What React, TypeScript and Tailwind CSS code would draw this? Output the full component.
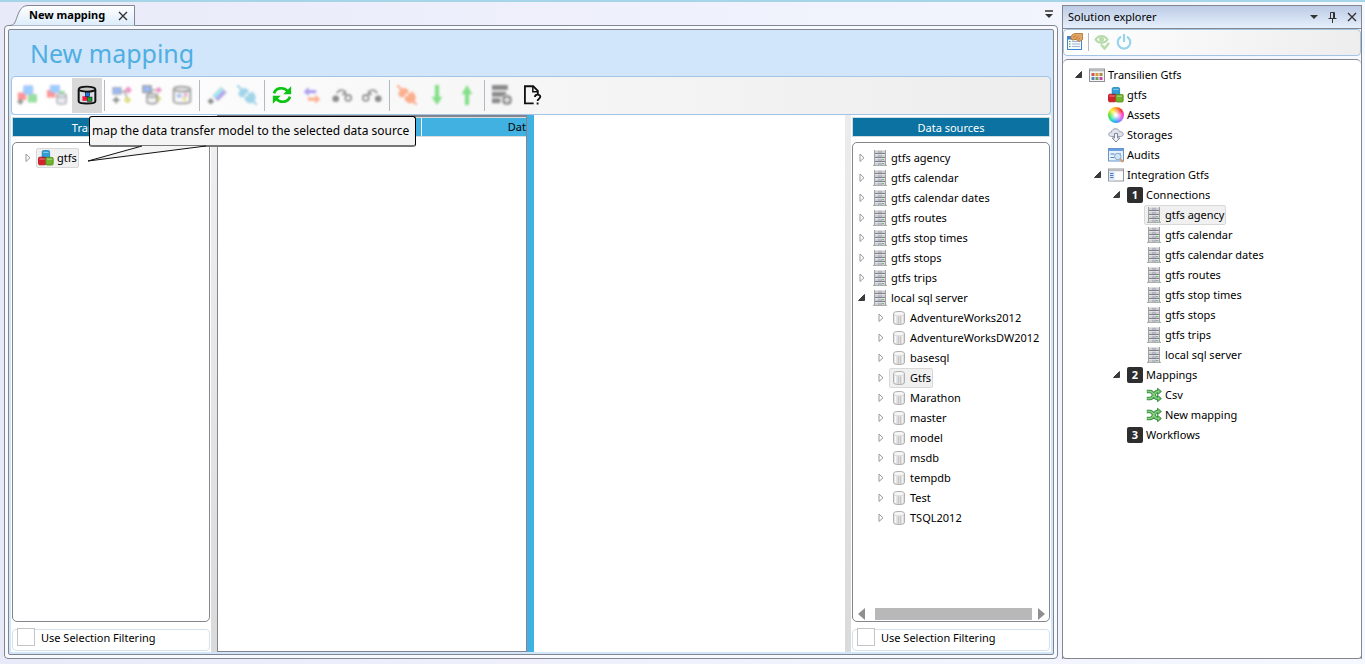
import type { ReactNode } from "react";

type IconName =
  | "blocks"
  | "server"
  | "db"
  | "solution"
  | "wheel"
  | "cloud"
  | "audit"
  | "window"
  | "one"
  | "two"
  | "three"
  | "shuffle";

type Node = {
  label: string;
  icon: IconName;
  level: number;
  state?: "open" | "closed";
  selected?: boolean;
};

function Cube({ x, y, c, d }: { x: number; y: number; c: string; d: string }) {
  return (
    <g>
      <rect x={x} y={y} width="7.4" height="7.6" rx="1.2" fill={c} stroke={d} strokeWidth=".8" />
      <path d={`M${x + 1} ${y + 1.8}h5.4`} stroke="#fff" strokeOpacity=".45" strokeWidth="1" />
    </g>
  );
}

function TreeIcon({ name }: { name: IconName }) {
  return (
    <svg viewBox="0 0 16 16" className="size-4 shrink-0" aria-hidden="true">
      {name === "blocks" && (
        <>
          <Cube x={4.2} y={0.6} c="#2f9fd8" d="#1c7fb4" />
          <Cube x={0.5} y={7.2} c="#d8202c" d="#a80f1b" />
          <Cube x={7.8} y={7.4} c="#72b52c" d="#4f8c14" />
        </>
      )}
      {name === "server" && (
        <>
          <path d="M1 15.4h14" stroke="#a8b0a8" strokeWidth="1.2" />
          <rect x="2.500" y="0" width="11" height="15" fill="#cdcfd1" />
          <path d="M6 0h4v15H6z" fill="#b6b6c6" />
          <path d="M2.500 3.500h11M2.500 7.500h11M2.500 11.500h11" stroke="#7f8286" />
          <path d="M3 4.500h10M3 8.500h10M3 12.500h10M3 .5h10" stroke="#f2f3f4" strokeOpacity=".6" />
          <path d="M2.500 0v15M13.500 0v15" stroke="#9fa1a4" />
          <path d="M10 13.500h2M10 9.500h2" stroke="#7fb388" />
        </>
      )}
      {name === "db" && (
        <>
          <path
            d="M2.500 3.500C2.500 2 5 1.500 8 1.500s5.500.5 5.500 2v9C13.500 14 11 14.500 8 14.500s-5.500-.5-5.500-2z"
            fill="#dedede"
            stroke="#b0b0b0"
          />
          <ellipse cx="8" cy="3.600" rx="4.600" ry="1.500" fill="#f6f6f6" />
          <path d="M4.500 6v6.800" stroke="#fafafa" strokeWidth="1.500" />
          <path d="M7.500 6.500v7M9.500 6.500v7" stroke="#c6c6c6" />
          <path d="M11.500 6v6.800" stroke="#f5f5f5" />
        </>
      )}
      {name === "solution" && (
        <>
          <rect x=".5" y="2" width="15" height="12.500" fill="#f4f4f4" stroke="#8d9094" />
          <path d="M1 3.300h14" stroke="#b7babd" strokeWidth="2" />
          <path d="M2.500 6h3v3h-3z" fill="#cf574f" />
          <path d="M6.500 6h3v3h-3z" fill="#d79a3c" />
          <path d="M10.500 6h3v3h-3z" fill="#a78845" />
          <path d="M2.500 10h3v3h-3z" fill="#5a7fc0" />
          <path d="M6.500 10h3v3h-3z" fill="#6fa455" />
          <path d="M10.500 10h3v3h-3z" fill="#c847a8" />
        </>
      )}
      {name === "wheel" && (
        <foreignObject x="0" y="0" width="16" height="16">
          <div className="size-4 rounded-full bg-[radial-gradient(circle,#fff_5%,transparent_60%),conic-gradient(#ff9a20,#ff3030,#ff40d0,#b070ff,#30a0ff,#20e0b0,#60e030,#ffee30,#ff9a20)]" />
        </foreignObject>
      )}
      {name === "cloud" && (
        <>
          <path
            d="M3.500 9.500C1.500 9.500.6 8.300.8 7c.2-1.200 1.300-1.800 2.400-1.700C3.600 3.200 5.300 1.700 7.500 1.700c2 0 3.600 1.200 4 3 2-.2 3.700.7 3.700 2.500 0 1.500-1.200 2.300-2.700 2.300z"
            fill="#dfe1ec"
            stroke="#9a9db0"
          />
          <path d="M6.500 6.500h3v4.500h2.300L8 15l-3.800-4h2.300z" fill="#f4f5fa" stroke="#7f8499" />
        </>
      )}
      {name === "audit" && (
        <>
          <rect x=".5" y="1.500" width="15" height="12.500" fill="#e6f1fc" stroke="#6793cc" />
          <path d="M1 3h14" stroke="#6c9fe0" strokeWidth="2" />
          <path d="M2.500 7h4M2.500 10.500h4M8 7h5" stroke="#5a84bd" />
          <circle cx="9.800" cy="9.500" r="3.200" fill="#cfe6f8" stroke="#86a7c5" />
          <path d="M12.200 12l2.800 3" stroke="#d9a066" strokeWidth="2" />
        </>
      )}
      {name === "window" && (
        <>
          <rect x=".5" y="2" width="15" height="12" fill="#fff" stroke="#94979b" />
          <path d="M1 3.300h14" stroke="#b9bcc0" strokeWidth="2" />
          <path d="M1 4.500h5.500v9H1z" fill="#dce7f8" />
          <path d="M2 6.500h3.500M2 8.500h3.500M2 10.500h3.500" stroke="#4e7bc4" />
        </>
      )}
      {(name === "one" || name === "two" || name === "three") && (
        <>
          <rect x="0" y="0" width="16" height="16" rx="2" fill="#2e2e2e" />
          <text x="8" y="12" textAnchor="middle" fontSize="11" fontWeight="700" fill="#fff">
            {name === "one" ? "1" : name === "two" ? "2" : "3"}
          </text>
        </>
      )}
      {name === "shuffle" && (
        <g fill="none" strokeLinejoin="round">
          <path
            d="M.8 4.500h3.500c3.500 0 3.700 7 7 7h1.500M.8 11.500h3.500c3.500 0 3.700-7 7-7h1.500"
            stroke="#3d8e43"
            strokeWidth="3.600"
          />
          <path d="M11.500 1.300l3.900 3.200-3.900 3.200zM11.500 8.300l3.900 3.200-3.900 3.200z" fill="#6dc06c" stroke="#3d8e43" />
          <path
            d="M1.300 4.500h3c3.500 0 3.700 7 7 7H13M1.300 11.500h3c3.500 0 3.700-7 7-7H13"
            stroke="#86cf82"
            strokeWidth="1.600"
          />
        </g>
      )}
    </svg>
  );
}

const indents = ["pl-0", "pl-[19px]", "pl-[38px]", "pl-[57px]"];

function Tree({ nodes, label }: { nodes: Node[]; label: string }) {
  return (
    <ul role="tree" aria-label={label}>
      {nodes.map((n) => (
        <li
          key={n.label}
          role="treeitem"
          aria-selected={!!n.selected}
          className={`flex h-5 items-center ${indents[n.level]}`}
        >
          <span className="flex w-4 shrink-0 justify-center">
            {n.state && (
              <svg viewBox="0 0 10 10" className="size-2.5" aria-hidden="true">
                {n.state === "open" ? (
                  <path d="M7.500 1.500v6H1.500z" fill="#3c3c3c" stroke="#222" strokeWidth=".8" />
                ) : (
                  <path d="M3 1v7.500L7 4.800z" fill="#fff" stroke="#999" />
                )}
              </svg>
            )}
          </span>
          <span
            className={`flex h-5 items-center gap-[3px] rounded-[2px] border px-px whitespace-nowrap ${
              n.selected ? "border-[#d8d8d8] bg-[#f0f0f0]" : "border-transparent"
            }`}
          >
            <TreeIcon name={n.icon} />
            {n.label}
          </span>
        </li>
      ))}
    </ul>
  );
}

function Tool({
  label,
  children,
  active,
  dim = true,
}: {
  label: string;
  children: ReactNode;
  active?: boolean;
  dim?: boolean;
}) {
  return (
    <button
      type="button"
      aria-label={label}
      className={`flex h-[35px] w-[30px] shrink-0 items-center justify-center pb-0.5 ${active ? "bg-[#d9d9d9]" : ""}`}
    >
      <svg
        viewBox="0 0 24 24"
        fill="none"
        aria-hidden="true"
        className={dim ? "size-5 opacity-50 blur-[0.8px]" : "size-5"}
      >
        {children}
      </svg>
    </button>
  );
}

function Sep() {
  return <span className="mx-0.5 h-[31px] w-px shrink-0 bg-[#b3b8c2]" />;
}

function Blocks() {
  return (
    <>
      <rect x="1" y="9" width="10" height="9" fill="#ff3030" />
      <rect x="13" y="11" width="11" height="10" fill="#35c045" />
      <rect x="8" y="1" width="11" height="10" rx="1" fill="#38a0ff" stroke="#6d72e8" />
    </>
  );
}

function Plus() {
  return <path d="M4 16.500v7M.5 20h7" stroke="#222" strokeWidth="2.500" />;
}

function Plug({ color }: { color: string }) {
  return (
    <g fill={color} stroke={color}>
      <path d="M0 0l5 5M19 19l5 5" strokeWidth="2.500" />
      <path d="M3 8c2-5 7-5 11-1l-8.500 8C2 13 1.500 10.500 3 8z" />
      <path d="M9 17l9-9C23 12 23 17 19.500 20s-7 1.500-10.500-3z" />
      <path d="M12 9l3 3M8 12l4 4" strokeWidth="2" />
    </g>
  );
}

function MainToolbar() {
  return (
    <div
      role="toolbar"
      aria-label="Mapping tools"
      className="flex h-[39px] shrink-0 items-center rounded border border-[#a3c4e2] bg-linear-to-r from-white to-[#ededed]"
    >
      <Tool label="Add transfer model">
        <Blocks />
        <Plus />
      </Tool>
      <Tool label="Create model from source">
        <rect x="0" y="6" width="10" height="9" fill="#ff3030" />
        <rect x="4" y="0" width="11" height="9" rx="1" fill="#38a0ff" stroke="#6d72e8" />
        <rect x="15" y="7" width="6" height="5" fill="#35c045" />
        <path d="M12 12.500v8.500c0 2.500 11 2.500 11 0v-8.500z" fill="#d4d8e2" stroke="#4a4f5c" strokeWidth="1.500" />
        <ellipse cx="17.500" cy="12.500" rx="5.500" ry="2" fill="#eee" stroke="#4a4f5c" strokeWidth="1.500" />
      </Tool>
      <div className="relative">
        <Tool label="Map model to data source" active dim={false}>
          <path d="M2 5.500v14c0 3.500 20 3.500 20 0v-14" fill="#d9dfe2" stroke="#111" strokeWidth="2.400" />
          <ellipse cx="12" cy="5" rx="10" ry="3" fill="#c5c5c5" stroke="#111" strokeWidth="2.200" />
          <rect x="6.500" y="13.500" width="5.500" height="5.500" fill="#f5173c" />
          <rect x="12.500" y="14.500" width="5.500" height="5" fill="#12a52b" stroke="#111" strokeWidth=".7" />
          <rect x="10" y="9" width="5" height="5" fill="#1677f2" stroke="#111" strokeWidth=".7" />
        </Tool>
        <div role="tooltip" className="absolute top-[38px] left-[17px] z-10 w-max">
          <div className="rounded-[3px] border border-b-2 border-black border-b-[#777] bg-[#f4f4f4] pr-1.5 pl-0.5 text-[12px] leading-7">
            map the data transfer model to the selected data source
          </div>
          <svg viewBox="0 0 120 17" className="absolute -bottom-[15px] -left-px h-[17px] w-[120px]" aria-hidden="true">
            <path d="M54 1L0 16 118 1z" fill="#f4f4f4" />
            <path d="M54 1L0 16 118 1" fill="none" stroke="#111" />
          </svg>
        </div>
      </div>
      <Sep />
      <Tool label="Add mapping">
        <rect x="1" y="3" width="10" height="8" fill="#3a78f0" stroke="#555" />
        <path d="M11 8h4l3 8M14 8l4-2" stroke="#333" strokeWidth="1.500" />
        <path d="M19.500 1.500l4.500 4.500-4.500 4.500L15 6z" fill="#dd3590" />
        <path d="M18.500 13.500l4.500 4.500-4.500 4.500L14 18z" fill="#c2bc10" />
        <path d="M5 14v8M1 18h8" stroke="#222" strokeWidth="2.500" />
      </Tool>
      <Tool label="Map to table">
        <rect x="1" y="1" width="10" height="8" fill="#3a78f0" stroke="#333" strokeWidth="1.500" />
        <path d="M11 6h6M12 12l5 3" stroke="#333" strokeWidth="1.500" />
        <path d="M20 2l4 4-4 4-4-4z" fill="#dd3590" />
        <path d="M19 12l4.500 4.500L19 21l-4-4z" fill="#c2bc10" />
        <path d="M6 12.500v8c0 2.500 12 2.500 12 0v-8z" fill="#e9e9e9" stroke="#333" strokeWidth="1.800" />
        <ellipse cx="12" cy="12.500" rx="6" ry="2" fill="#eee" stroke="#333" strokeWidth="1.800" />
      </Tool>
      <Tool label="Map database">
        <path d="M2 5.500v14c0 3.500 20 3.500 20 0v-14" fill="#f4f4f4" stroke="#444" strokeWidth="2.200" />
        <ellipse cx="12" cy="5" rx="10" ry="3" fill="#ccc" stroke="#444" strokeWidth="2.200" />
        <rect x="6" y="11" width="5" height="4" fill="#557ce8" />
        <path d="M11 13l5 3" stroke="#777" />
        <rect x="15" y="10" width="3" height="4" fill="#dd3590" />
        <rect x="13" y="15" width="4" height="4" fill="#d2cc20" />
      </Tool>
      <Sep />
      <Tool label="New field">
        <path d="M7 13L17 3l6 6-10 10z" fill="#6f50ea" stroke="#666" />
        <path d="M7 13L17 3l3 3L10 16z" fill="#4fd9e5" />
        <path d="M4.500 15.500l4 4-4 4-4-4z" fill="#222" />
      </Tool>
      <Tool label="Connect">
        <Plug color="#4aaed8" />
      </Tool>
      <Sep />
      <Tool label="Refresh" dim={false}>
        <g stroke="#0cc414" strokeWidth="3.200">
          <path d="M2.500 10C4 3.500 13.500 1.500 19 7.500" />
          <path d="M21.500 14C20 20.500 10.500 22.500 5 16.500" />
        </g>
        <path d="M23 1.500V11h-9.500zM1 22.500V13h9.500z" fill="#0cc414" />
      </Tool>
      <Tool label="Swap">
        <path d="M22 17l-6-5.500V15H7v4h9v3.500z" fill="#ff6a28" />
        <path d="M2 8l6-5.500V6h9v4H8v3.500z" fill="#6548e5" />
      </Tool>
      <Tool label="Step forward">
        <circle cx="4.500" cy="16.500" r="4" fill="#222" />
        <circle cx="19.500" cy="15.500" r="3.500" stroke="#333" strokeWidth="2.200" />
        <path d="M6 10c2-5 8-5 10-1" stroke="#333" strokeWidth="2" />
        <path d="M17 6v6h-6z" fill="#333" />
      </Tool>
      <Tool label="Step back">
        <circle cx="19.500" cy="16.500" r="4" fill="#222" />
        <circle cx="4.500" cy="15.500" r="3.500" stroke="#333" strokeWidth="2.200" />
        <path d="M18 10c-2-5-8-5-10-1" stroke="#333" strokeWidth="2" />
        <path d="M7 6v6h6z" fill="#333" />
      </Tool>
      <Sep />
      <Tool label="Disconnect">
        <Plug color="#ff6523" />
      </Tool>
      <Tool label="Move down">
        <path d="M9.500 0h5v14h4L12 24 5.500 14h4z" fill="#14c81e" />
      </Tool>
      <Tool label="Move up">
        <path d="M9.500 24h5V11h4L12 0 5.500 11h4z" fill="#14c81e" />
      </Tool>
      <Sep />
      <Tool label="Add data set">
        <g fill="#222">
          <rect x="-2" y="0" width="21" height="6" rx="1" />
          <rect x="-2" y="8" width="19" height="6" rx="1" />
          <rect x="-2" y="16" width="12" height="6" rx="1" />
          <circle cx="18" cy="18" r="6.500" stroke="#eee" />
        </g>
        <path d="M18 14v8M14 18h8" stroke="#fff" strokeWidth="1.800" />
      </Tool>
      <Tool label="Help" dim={false}>
        <path d="M14 22H3.500V1.500h10L19 7v4" stroke="#111" strokeWidth="2.200" />
        <path d="M13 1.500V8h6" stroke="#111" strokeWidth="1.800" />
        <path d="M15.500 14.500c0-3.800 6.500-3.800 6.500-.3 0 2.300-3.300 2.300-3.300 5M18.700 21v2.500" stroke="#111" strokeWidth="2.200" />
      </Tool>
    </div>
  );
}

function SidePanel({
  title,
  nodes,
  pad,
  scroll,
}: {
  title: string;
  nodes: Node[];
  pad: string;
  scroll?: boolean;
}) {
  return (
    <section className="flex w-[200px] shrink-0 flex-col px-px pt-0.5 pb-px">
      <h2 className="h-5 shrink-0 border border-[#cfdce2] bg-[#0b72a1] text-center leading-[19px] text-white">
        {title}
      </h2>
      <div
        className={`mt-[5px] flex min-h-0 flex-1 flex-col rounded-[5px] border border-[#85858b] bg-white pt-[5px] ${pad}`}
      >
        <Tree nodes={nodes} label={title} />
        {scroll && (
          <div className="mt-auto flex h-[15px] items-center gap-2.5 px-1">
            <svg viewBox="0 0 7 12" className="h-3 w-[7px]" aria-hidden="true">
              <path d="M7 0v12L0 6z" fill="#8f8f8f" />
            </svg>
            <span className="h-3 flex-1 bg-[#b8b8b8]" />
            <svg viewBox="0 0 7 12" className="-ml-1 h-3 w-[7px]" aria-hidden="true">
              <path d="M0 0v12l7-6z" fill="#8f8f8f" />
            </svg>
          </div>
        )}
      </div>
      <label className="mt-[7px] flex h-[22px] shrink-0 items-center gap-1.5 rounded border border-[#d5e1ea] bg-white pl-1">
        <input
          type="checkbox"
          className="size-[18px] -translate-y-[3px] appearance-none border border-[#c4c4c4] bg-white"
        />
        <span className="pb-1 leading-4">Use Selection Filtering</span>
      </label>
    </section>
  );
}

const sources = ["agency", "calendar", "calendar dates", "routes", "stop times", "stops", "trips"];

const dataSources: Node[] = [
  ...sources.map((s): Node => ({ label: `gtfs ${s}`, icon: "server", level: 0, state: "closed" })),
  { label: "local sql server", icon: "server", level: 0, state: "open" },
  ...[
    "AdventureWorks2012",
    "AdventureWorksDW2012",
    "basesql",
    "Gtfs",
    "Marathon",
    "master",
    "model",
    "msdb",
    "tempdb",
    "Test",
    "TSQL2012",
  ].map((s): Node => ({ label: s, icon: "db", level: 1, state: "closed", selected: s === "Gtfs" })),
];

const transferModel: Node[] = [
  { label: "gtfs", icon: "blocks", level: 0, state: "closed", selected: true },
];

const solution: Node[] = [
  { label: "Transilien Gtfs", icon: "solution", level: 0, state: "open" },
  { label: "gtfs", icon: "blocks", level: 1 },
  { label: "Assets", icon: "wheel", level: 1 },
  { label: "Storages", icon: "cloud", level: 1 },
  { label: "Audits", icon: "audit", level: 1 },
  { label: "Integration Gtfs", icon: "window", level: 1, state: "open" },
  { label: "Connections", icon: "one", level: 2, state: "open" },
  ...sources.map((s): Node => ({ label: `gtfs ${s}`, icon: "server", level: 3, selected: s === "agency" })),
  { label: "local sql server", icon: "server", level: 3 },
  { label: "Mappings", icon: "two", level: 2, state: "open" },
  { label: "Csv", icon: "shuffle", level: 3 },
  { label: "New mapping", icon: "shuffle", level: 3 },
  { label: "Workflows", icon: "three", level: 2 },
];

function Cross() {
  return (
    <svg viewBox="0 0 10 10" className="size-[10px]" aria-hidden="true">
      <path d="M1 1l8 8M9 1L1 9" stroke="#333" strokeWidth="1.400" />
    </svg>
  );
}

function Document() {
  return (
    <main className="flex min-w-0 flex-1 flex-col">
      <div className="flex h-[23px] shrink-0 items-end justify-between pr-[5px] pl-[5px]">
        <div className="relative z-10 -mb-px flex h-[21px] w-[126px] items-center pl-5">
          <svg
            viewBox="0 0 126 21"
            preserveAspectRatio="none"
            className="absolute inset-0 -z-10 size-full"
            aria-hidden="true"
          >
            <defs>
              <linearGradient id="tab" x2="0" y2="1">
                <stop stopColor="#fff" />
                <stop offset="1" stopColor="#dcecfb" />
              </linearGradient>
            </defs>
            <path
              d="M0 20.500C6 20.500 6 17 8 12 11 4 13 1 19 .5h106.500v20"
              fill="url(#tab)"
              stroke="#83868f"
            />
          </svg>
          <span className="font-['Noto_Sans',sans-serif] text-[11px] font-bold">New mapping</span>
          <button type="button" aria-label="Close tab" className="mr-[7px] ml-auto">
            <Cross />
          </button>
        </div>
        <button type="button" aria-label="Documents" className="mb-1.5">
          <svg viewBox="0 0 8 9" className="h-[9px] w-2" aria-hidden="true">
            <path d="M0 1h8" stroke="#333" strokeWidth="1.500" />
            <path d="M0 4h8L4 8z" fill="#333" />
          </svg>
        </button>
      </div>
      <div className="flex min-h-0 flex-1 flex-col rounded border border-[#83868f] bg-[#f7faff] p-[3px]">
        <div className="flex min-h-0 flex-1 flex-col rounded-[2px] border border-[#83868f] bg-[#d1e6fa] p-0.5 pt-0">
          <h1 className="h-[46px] shrink-0 pl-[19px] text-[25px] leading-[47px] text-[#4faee2]">New mapping</h1>
          <MainToolbar />
          <div className="flex min-h-0 flex-1 bg-white">
            <SidePanel title="Transfer model" nodes={transferModel} pad="pl-[7px]" />
            <div className="w-1.5 shrink-0 bg-linear-to-b from-[#f0f0f0] to-[#dadada]" />
            <div className="flex w-[310px] shrink-0 border border-t-2 border-[#85858d]">
              <div className="flex h-[20px] min-w-0 flex-1 gap-px border-y border-[#ddd] bg-white leading-[18px]">
                <span className="w-[203px] bg-[#41b1e1]" />
                <span className="flex-1 bg-[#41b1e1] text-right">Dat</span>
              </div>
            </div>
            <div className="w-[7px] shrink-0 bg-[#41b1e1]" />
            <div className="min-w-0 flex-1" />
            <div className="w-1.5 shrink-0 bg-linear-to-b from-[#ececec] to-[#dadada]" />
            <SidePanel title="Data sources" nodes={dataSources} pad="pl-px" scroll />
          </div>
        </div>
      </div>
    </main>
  );
}

function Explorer() {
  return (
    <aside className="flex w-[300px] shrink-0 flex-col pt-[3px]">
      <header className="flex h-6 shrink-0 items-center gap-2.5 border border-[#83868f] bg-linear-to-b from-[#bccbe5] to-[#e6effc] pr-1 pl-[5px]">
        <h2 className="mr-auto">Solution explorer</h2>
        <button type="button" aria-label="Options">
          <svg viewBox="0 0 8 4" className="h-1 w-2" aria-hidden="true">
            <path d="M0 0h8L4 4z" fill="#333" />
          </svg>
        </button>
        <button type="button" aria-label="Pin">
          <svg viewBox="0 0 9 11" className="h-[11px] w-[9px]" fill="none" stroke="#333" aria-hidden="true">
            <path d="M2.500 6.500v-6h4v6M5.500 1v5M.5 6.500h8M4.500 7v4" />
          </svg>
        </button>
        <button type="button" aria-label="Close">
          <Cross />
        </button>
      </header>
      <div className="flex min-h-0 flex-1 flex-col border-x border-[#83868f]">
        <div
          role="toolbar"
          aria-label="Explorer tools"
          className="flex h-[27px] shrink-0 items-center rounded border border-[#a3c4e2] bg-linear-to-r from-white to-[#ededed] pb-0.5 pl-[3px]"
        >
          <button type="button" aria-label="Properties">
            <svg viewBox="0 0 16 17" className="h-[17px] w-4" aria-hidden="true">
              <rect x=".5" y="3.500" width="14" height="13" fill="#f5f9ff" stroke="#3d84d0" />
              <path d="M1 5h13" stroke="#3d84d0" strokeWidth="3" />
              <path d="M2 8.500h1.500M2 11h1.500M2 13.500h1.500" stroke="#3fa33f" />
              <path d="M5 8.500h8M5 11h8M5 13.500h8" stroke="#a5b7cf" />
              <path d="M3.500 4C5 1.500 7 0 10 .5h5.500v6L12.500 8.500 9 6.500 5 7z" fill="#e3a566" stroke="#a8702f" strokeWidth=".8" />
              <path d="M6 4.500l3-2M8.500 5.500l3-2M11 6.500l2-1.500" stroke="#a8702f" strokeWidth=".7" />
            </svg>
          </button>
          <span className="mx-[5px] h-[18px] w-px bg-[#b3b8c2]" />
          <button type="button" aria-label="Validate" className="opacity-45">
            <svg viewBox="0 0 16 16" className="size-4" fill="none" aria-hidden="true">
              <path d="M1.500 5.500C4.500 1 10.500 1 13.500 5.500c-3 4.500-9 4.500-12 0z" stroke="#67b54d" strokeWidth="2.200" />
              <circle cx="7.500" cy="5.500" r="2.500" fill="#67b54d" />
              <path d="M7 10.500l3.500 4L15 9" stroke="#67b54d" strokeWidth="2.500" />
            </svg>
          </button>
          <button type="button" aria-label="Power" className="ml-1.5 opacity-45">
            <svg viewBox="0 0 16 16" className="size-4" fill="none" stroke="#1ba7dc" strokeWidth="2.200" aria-hidden="true">
              <path d="M5 2.700a6.300 6.300 0 1 0 6 0M8 0v8" />
            </svg>
          </button>
        </div>
        <div className="mt-[3px] flex-1 rounded-[5px] border-t border-[#83868f] bg-white pt-[5px] pl-2">
          <Tree nodes={solution} label="Solution" />
        </div>
      </div>
      <div className="-mt-1 h-1 shrink-0 rounded-b-[4px] border-x border-b border-[#83868f]" />
    </aside>
  );
}

export default function App() {
  return (
    <div className="flex h-screen min-h-[560px] gap-1 border-t-2 border-[#a6d5e8] bg-linear-to-r from-[#e9eaf9] to-[#f5f8ff] pr-[3px] pb-[5px] pl-1 font-['Noto_Sans','Open_Sans',sans-serif] text-[11px] text-black">
      <Document />
      <Explorer />
    </div>
  );
}
